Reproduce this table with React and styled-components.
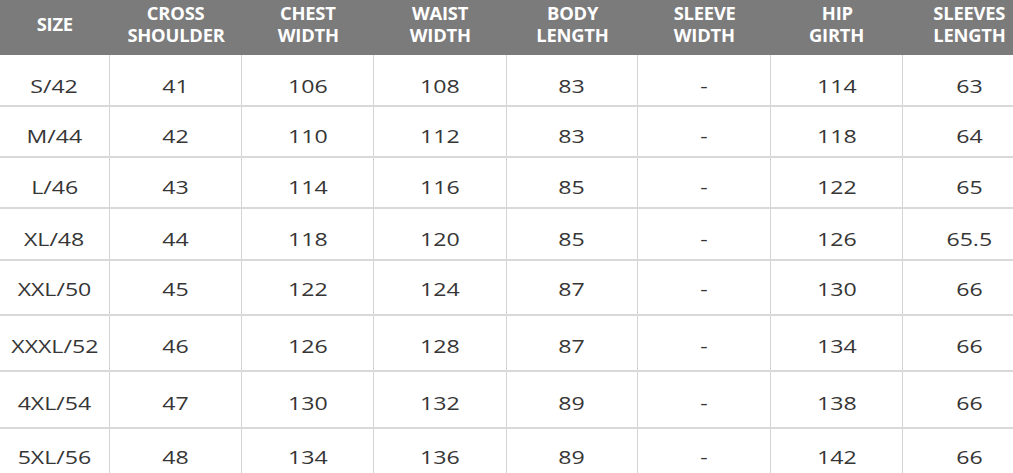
import React from 'react';
import styled, { createGlobalStyle } from 'styled-components';

const GlobalStyle = createGlobalStyle`
    html, body {
        margin: 0;
        padding: 0;
        background: #fff;
        overflow: hidden;
    }
    body {
        font-family: "Open Sans", "Noto Sans", "Liberation Sans", sans-serif;
    }
`;

const columns = [
    ['SIZE'],
    ['CROSS', 'SHOULDER'],
    ['CHEST', 'WIDTH'],
    ['WAIST', 'WIDTH'],
    ['BODY', 'LENGTH'],
    ['SLEEVE', 'WIDTH'],
    ['HIP', 'GIRTH'],
    ['SLEEVES', 'LENGTH'],
];

// height and small vertical shift per row, as in the chart
const rows = [
    { h: 52, shift: 10, cells: ['S/42', '41', '106', '108', '83', '-', '114', '63'] },
    { h: 51, shift: 7, cells: ['M/44', '42', '110', '112', '83', '-', '118', '64'] },
    { h: 51, shift: 7, cells: ['L/46', '43', '114', '116', '85', '-', '122', '65'] },
    { h: 52, shift: 8, cells: ['XL/48', '44', '118', '120', '85', '-', '126', '65.5'] },
    { h: 55, shift: 1, cells: ['XXL/50', '45', '122', '124', '87', '-', '130', '66'] },
    { h: 56, shift: 4, cells: ['XXXL/52', '46', '126', '128', '87', '-', '134', '66'] },
    { h: 57, shift: 5, cells: ['4XL/54', '47', '130', '132', '89', '-', '138', '66'] },
    { h: 57, shift: 0, cells: ['5XL/56', '48', '134', '136', '89', '-', '142', '66'] },
];

function App() {
    return (
        <>
            <GlobalStyle />
            <Chart>
                <Table>
                    <HeadRow>
                        {columns.map((lines, i) => (
                            <HeadCell key={i}>
                                {lines.map(l => <Wide key={l} $sx={1.08}>{l}</Wide>)}
                            </HeadCell>
                        ))}
                    </HeadRow>
                    {rows.map((row, r) => (
                        <Row key={r} $h={row.h}>
                            {row.cells.map((c, i) => (
                                <Cell key={i} $shift={row.shift}>
                                    <Wide $sx={1.25}>{c}</Wide>
                                </Cell>
                            ))}
                        </Row>
                    ))}
                </Table>
            </Chart>
        </>
    );
}

const Chart = styled.div`
    width: 1013px;
    height: 473px;
    overflow: hidden;
`;

const Table = styled.div`
    width: 1036px;
    display: flex;
    flex-direction: column;
`;

const grid = `
    display: grid;
    grid-template-columns: 110px 132px 132px 133px 131px 133px 132px 133px;
`;

// the chart's lettering is a bit wider than the font
const Wide = styled.span`
    display: inline-block;
    transform: scaleX(${p => p.$sx});
`;

const HeadRow = styled.div`
    ${grid}
    height: 55px;
    background: #7b7b7b;
`;

const HeadCell = styled.div`
    display: flex;
    flex-direction: column;
    align-items: center;
    justify-content: center;
    padding-bottom: 5px;
    color: #fff;
    font-weight: 700;
    font-size: 17px;
    line-height: 22.5px;
    letter-spacing: -0.2px;
`;

const Row = styled.div`
    ${grid}
    height: ${p => p.$h}px;
    border-bottom: 2px solid #d9d9d9;
    box-sizing: border-box;
`;

const Cell = styled.div`
    display: flex;
    align-items: center;
    justify-content: center;
    padding-top: ${p => p.$shift}px;
    box-sizing: border-box;
    border-right: 1px solid #d4d4d4;
    color: #363636;
    font-size: 18.5px;
    &:last-child {
        border-right: none;
    }
`;

export default App;
